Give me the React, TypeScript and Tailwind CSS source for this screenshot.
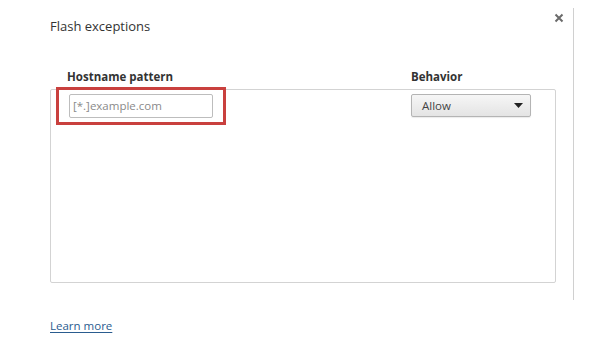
import React from "react";

export default function App() {
  const font = { fontFamily: '"Open Sans", "Noto Sans", "Liberation Sans", sans-serif' };
  return (
    <div className="w-[600px] h-[350px] bg-white flex overflow-hidden" style={font}>
      <div className="w-[573px] flex flex-col pl-[50px] pr-[18px]">
        <div className="flex items-start justify-between pt-[17px] h-[62px]">
          <div className="text-[13px] leading-[18px] text-[#333]">Flash exceptions</div>
          <svg width="10" height="10" viewBox="0 0 10 10" className="mt-[-4px] mr-[-9px]">
            <path d="M1.5 1.5 L8.5 8.5 M8.5 1.5 L1.5 8.5" stroke="#6b6b6b" strokeWidth="2" />
          </svg>
        </div>
        <div className="flex h-[27px] items-start pt-[7px] text-[11.5px] leading-[16px] font-bold text-[#333]">
          <div className="pl-[17px] w-[361px]">Hostname pattern</div>
          <div>Behavior</div>
        </div>
        <div className="relative w-[506px] h-[194px] border border-[#d3d3d3] rounded-[2px]">
          <div className="flex items-start pt-[4px]">
            <div className="pl-[18px] w-[360px]">
              <div className="w-[144px] h-[24px] border border-[#bdbdbd] rounded-[2px] flex items-center pl-[3px] text-[11.5px] text-[#8a8a8a]">
                [*.]example.com
              </div>
            </div>
            <div className="w-[120px] h-[23px] border border-[#b4b4b4] rounded-[2px] bg-gradient-to-b from-[#f6f6f6] to-[#e4e4e4] flex items-center justify-between pl-[10px] pr-[7px] text-[11.5px] text-[#444] shadow-[0_1px_1px_rgba(0,0,0,0.08)]">
              <span>Allow</span>
              <svg width="9" height="5" viewBox="0 0 9 5">
                <path d="M0 0 L9 0 L4.5 5 Z" fill="#222" />
              </svg>
            </div>
          </div>
          <div className="absolute left-[5px] top-[-3px] w-[170px] h-[38px] border-[3px] border-[#c9403e]" />
        </div>
        <div className="pt-[29px]">
          <a className="text-[11.5px] leading-[16px] text-[#2a5c8f] underline underline-offset-2" href="#">Learn more</a>
        </div>
      </div>
      <div className="w-px bg-[#d0d0d0] mt-[8px] h-[292px]" />
    </div>
  );
}
